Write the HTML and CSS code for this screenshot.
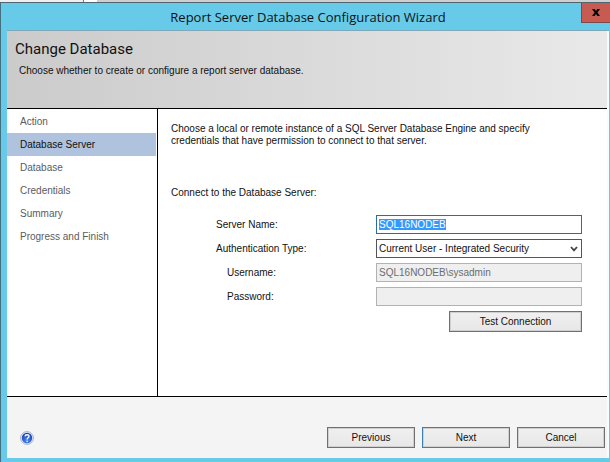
FILE: index.html
```html
<!DOCTYPE html>
<html lang="en">
<head>
    <meta charset="UTF-8">
    <meta name="viewport" content="width=device-width, initial-scale=1.0">
    <title>Report Server Database Configuration Wizard</title>
    <link rel="stylesheet" href="styles.css">
</head>
<body>
    <div class="backdrop"></div>
    <div class="window">
        <header class="titlebar">
            <span class="title">Report Server Database Configuration Wizard</span>
            <button class="close" type="button" aria-label="Close">
                <svg width="8" height="7" viewBox="0 0 8 7"><path d="M0 0h2.6L4 2.1 5.4 0H8L5.4 3.5 8 7H5.4L4 4.9 2.6 7H0l2.6-3.5z" fill="#000"/></svg>
            </button>
        </header>
        <div class="client">
            <div class="banner">
                <h1>Change Database</h1>
                <p>Choose whether to create or configure a report server database.</p>
            </div>
            <div class="content">
                <nav class="steps">
                    <ul>
                        <li>Action</li>
                        <li class="current">Database Server</li>
                        <li>Database</li>
                        <li>Credentials</li>
                        <li>Summary</li>
                        <li>Progress and Finish</li>
                    </ul>
                </nav>
                <main class="page">
                    <p class="intro">Choose a local or remote instance of a SQL Server Database Engine and specify credentials that have permission to connect to that server.</p>
                    <p class="section">Connect to the Database Server:</p>
                    <form class="form">
                        <label for="server">Server Name:</label>
                        <input id="server" type="text" value="SQL16NODEB" spellcheck="false">
                        <label for="auth">Authentication Type:</label>
                        <select id="auth">
                            <option>Current User - Integrated Security</option>
                            <option>SQL Server Account</option>
                        </select>
                        <label class="sub" for="username">Username:</label>
                        <input id="username" type="text" value="SQL16NODEB\sysadmin" disabled>
                        <label class="sub" for="password">Password:</label>
                        <input id="password" type="password" disabled>
                        <button class="btn test" type="button">Test Connection</button>
                    </form>
                </main>
            </div>
            <footer class="footer">
                <button class="help" type="button" aria-label="Help">
                    <svg width="14" height="14" viewBox="0 0 14 14">
                        <defs>
                            <radialGradient id="ball" cx="50%" cy="75%" r="70%">
                                <stop offset="0" stop-color="#4a8cf0"/>
                                <stop offset="1" stop-color="#1b3fae"/>
                            </radialGradient>
                        </defs>
                        <circle cx="7" cy="7" r="6.4" fill="#e8edf6" stroke="#8c9fc4" stroke-width="0.8"/>
                        <circle cx="7" cy="7" r="5.2" fill="url(#ball)"/>
                        <path d="M5 5.4C5.1 3.2 9 3.2 9 5.4 9 6.8 7.1 6.8 7.1 8.4" fill="none" stroke="#fff" stroke-width="1.3"/>
                        <circle cx="7.1" cy="10.3" r="0.8" fill="#fff"/>
                    </svg>
                </button>
                <button class="btn" type="button">Previous</button>
                <button class="btn default" type="button">Next</button>
                <button class="btn" type="button">Cancel</button>
            </footer>
        </div>
    </div>
    <script>
        document.getElementById('server').focus();
        document.getElementById('server').select();
    </script>
</body>
</html>
```
FILE: styles.css
```css
* {
    box-sizing: border-box;
}

body {
    display: flex;
    flex-direction: column;
    min-height: 100vh;
    margin: 0;
    background-color: #ffffff;
    color: #111111;
    font-family: "Liberation Sans", Arial, sans-serif;
    font-size: 10px;
    line-height: 12px;
}

h1, p, ul {
    margin: 0;
    padding: 0;
    font-weight: normal;
}

.backdrop {
    height: 2px;
    background: linear-gradient(to right, #f0f0f0 83px, #777777 83px, #777777 84px, #ffffff 84px, #ffffff 97px, #cfcfcf 97px);
}

.window {
    flex: 1;
    display: flex;
    flex-direction: column;
    padding: 0 1px 4px 6px;
    background-color: #66cae8;
    border-top: 1px solid #4f6670;
    border-left: 1px solid #42707f;
}

.titlebar {
    position: relative;
    display: flex;
    justify-content: center;
    height: 28px;
    border-bottom: 1px solid #7fa9b8;
}

.title {
    font-family: "Open Sans", "Noto Sans", sans-serif;
    font-size: 13px;
    line-height: 28px;
}

.close {
    position: absolute;
    top: 0;
    right: -1px;
    display: flex;
    align-items: center;
    justify-content: center;
    width: 29px;
    height: 20px;
    padding: 0;
    background-color: #c75b52;
    border: 1px solid #7c4a4c;
    border-width: 0 0 1px 1px;
}

.client {
    flex: 1;
    display: flex;
    flex-direction: column;
    padding-right: 2px;
    background-color: #fafafa;
}

.banner {
    height: 78px;
    padding: 8px;
    background: linear-gradient(to right, #cbcbcb, #e9e9e9);
    border-bottom: 1px solid #000000;
}

.banner h1 {
    font-family: Roboto, "Liberation Sans", sans-serif;
    font-size: 15px;
    line-height: 20px;
}

.banner p {
    padding: 6px 4px;
}

.content {
    flex: 1;
    display: flex;
    background-color: #ffffff;
    border-bottom: 1px solid #000000;
}

.steps {
    width: 151px;
    padding: 1px 1px 0 0;
    border-right: 1px solid #000000;
}

.steps ul {
    list-style: none;
}

.steps li {
    padding-left: 13px;
    line-height: 23px;
    color: #5c5c5c;
}

.steps .current {
    background-color: #afc3de;
    color: #111111;
}

.page {
    flex: 1;
    padding: 14px 25px 0 13px;
}

.intro {
    max-width: 380px;
}

.section {
    margin-top: 40px;
}

.form {
    display: grid;
    grid-template-columns: 160px 1fr;
    align-items: center;
    gap: 5px 0;
    margin-top: 16px;
    padding-left: 45px;
}

.form .sub {
    padding-left: 11px;
}

input, select {
    width: 100%;
    height: 19px;
    padding: 0 2px;
    background-color: #ffffff;
    border: 1px solid #2f6ba0;
    border-radius: 0;
    color: #111111;
    font: inherit;
    outline: none;
}

select {
    appearance: none;
    border-color: #555555;
    background: #ffffff url("data:image/svg+xml,%3Csvg xmlns='http://www.w3.org/2000/svg' width='8' height='6'%3E%3Cpath d='M1 1l3 3.4L7 1' fill='none' stroke='%23444' stroke-width='1.8'/%3E%3C/svg%3E") no-repeat right 3px center;
}

input:disabled {
    background-color: #efefef;
    border-color: #b2b2b2;
    color: #6d6d6d;
}

input::selection {
    background-color: #3399ff;
    color: #ffffff;
}

.btn {
    width: 88px;
    height: 21px;
    padding: 0;
    background: linear-gradient(#f0f0f0, #e7e7e7);
    border: 1px solid #707070;
    box-shadow: inset 0 0 0 1px #d0d0d0;
    color: #111111;
    font: inherit;
}

.btn.default {
    border-color: #3c7fb1;
}

.btn.test {
    grid-column: 2;
    justify-self: end;
    width: 133px;
}

.footer {
    display: flex;
    align-items: center;
    gap: 7px;
    height: 61px;
    padding: 20px 2px 0 13px;
    background-color: #f4f4f4;
}

.help {
    display: flex;
    margin-right: auto;
    padding: 0;
    background: none;
    border: none;
}
```
